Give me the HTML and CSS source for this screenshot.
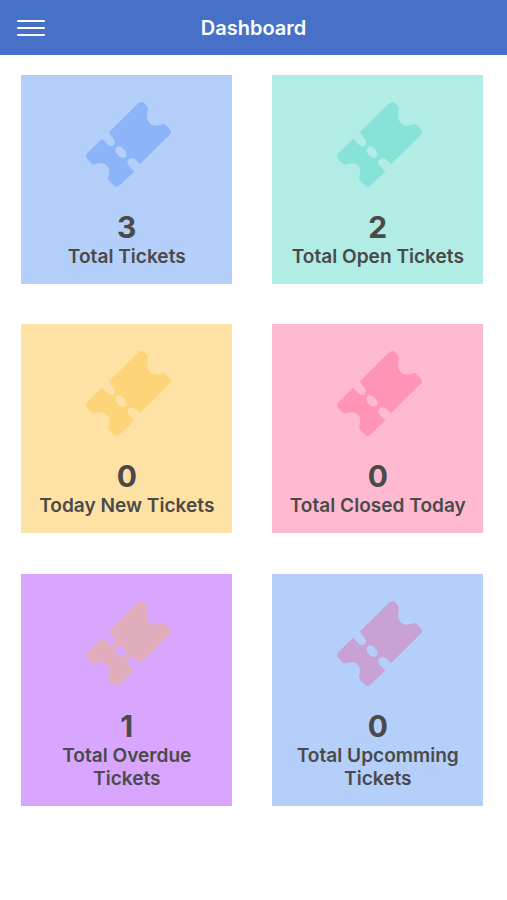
FILE: index.html
```
<!DOCTYPE html>
<html lang="en">
<head>
    <meta charset="UTF-8">
    <meta name="viewport" content="width=device-width, initial-scale=1.0">
    <title>Dashboard</title>
    <link rel="stylesheet" href="styles.css">
</head>
<body>
    <!-- shared ticket icon -->
    <svg class="sprite" aria-hidden="true">
        <symbol id="ticket" viewBox="15 28 273 260">
            <path fill-rule="evenodd" d="M98 122L186 35Q195 27 203 33L212 42Q217 48 215 55C211 75 214 90 226 98C236 104 246 101 254 98Q262 94 268 99L282 114Q288 121 282 128L192 217L179 204Q168 196 159 202C151 209 153 217 163 227L175 239L131 281Q124 288 116 283L100 268Q95 263 97 255C103 235 99 227 89 218C79 212 68 214 58 217Q49 219 44 213L32 199Q27 192 33 185L78 141L92 155Q102 166 111 161C119 155 118 147 111 138ZM122 166C116 173 119 183 126 190C134 199 144 200 149 195C154 188 151 179 144 172C136 163 127 160 122 166Z"/>
        </symbol>
    </svg>

    <header class="header">
        <button class="menu-btn" aria-label="Menu">
            <span class="navicon"></span>
            <span class="navicon"></span>
            <span class="navicon"></span>
        </button>
        <h1 class="title">Dashboard</h1>
    </header>

    <main class="cards">
        <div class="card blue">
            <svg class="icon"><use href="#ticket"/></svg>
            <div class="count">3</div>
            <div class="label">Total Tickets</div>
        </div>
        <div class="card teal">
            <svg class="icon"><use href="#ticket"/></svg>
            <div class="count">2</div>
            <div class="label">Total Open Tickets</div>
        </div>
        <div class="card yellow">
            <svg class="icon"><use href="#ticket"/></svg>
            <div class="count">0</div>
            <div class="label">Today New Tickets</div>
        </div>
        <div class="card pink">
            <svg class="icon"><use href="#ticket"/></svg>
            <div class="count">0</div>
            <div class="label">Total Closed Today</div>
        </div>
        <div class="card purple">
            <svg class="icon"><use href="#ticket"/></svg>
            <div class="count">1</div>
            <div class="label">Total Overdue Tickets</div>
        </div>
        <div class="card upcoming">
            <svg class="icon"><use href="#ticket"/></svg>
            <div class="count">0</div>
            <div class="label">Total Upcomming Tickets</div>
        </div>
    </main>
</body>
</html>
```
FILE: styles.css
```
* {
    box-sizing: border-box;
}

body {
    margin: 0;
    background-color: #fff;
    font-family: Inter, "Liberation Sans", sans-serif;
    color: #4a4a4a;
}

.sprite {
    display: none;
}

/* header */

.header {
    display: grid;
    grid-template-columns: 62px 1fr 62px;
    align-items: center;
    height: 54.5px;
    background-color: #4771c8;
    color: #fff;
}

.menu-btn {
    display: flex;
    flex-direction: column;
    gap: 5px;
    margin: 2px 0 0;
    padding: 0 17px;
    border: 0;
    background: none;
}

.navicon {
    width: 28px;
    height: 2px;
    border-radius: 1px;
    background-color: #fff;
}

.title {
    margin: 0;
    padding-top: 1px;
    font-size: 20px;
    font-weight: 600;
    line-height: 24px;
    text-align: center;
}

/* cards */

.cards {
    display: grid;
    grid-template-columns: 211px 211px;
    gap: 40.4px 40px;
    padding: 20.3px 0 0 21.3px;
}

.card {
    display: flex;
    flex-direction: column;
    align-items: center;
    padding: 26px 14px 16px;
    text-align: center;
}

.icon {
    width: 91px;
    height: 87px;
}

.count {
    margin-top: 21px;
    font-size: 30px;
    font-weight: 700;
    line-height: 36px;
}

.label {
    font-size: 19.1px;
    font-weight: 600;
    line-height: 23px;
}

.blue {
    background-color: #b4cffa;
    fill: #8cb4f8;
}

.teal {
    background-color: #b1ede5;
    fill: #87e3d7;
}

.yellow {
    background-color: #fee1a5;
    fill: #fed479;
}

.pink {
    background-color: #ffbad1;
    fill: #ff94b6;
}

.purple {
    background-color: #d8a6ff;
    fill: #e1adbc;
}

.upcoming {
    background-color: #b4cffa;
    fill: #c9a2d5;
}
```
